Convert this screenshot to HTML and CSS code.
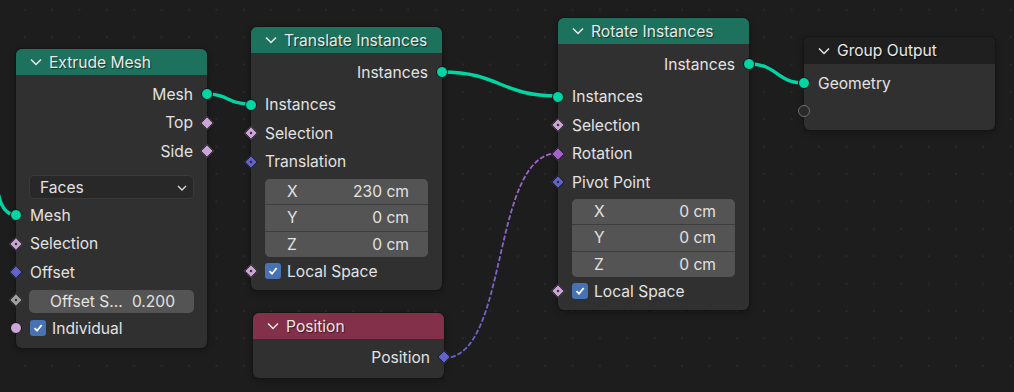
FILE: index.html
```html
<!DOCTYPE html>
<html lang="en">
<head>
    <meta charset="UTF-8">
    <meta name="viewport" content="width=device-width, initial-scale=1.0">
    <title>Geometry Nodes</title>
    <link rel="stylesheet" href="styles.css">
</head>
<body>

    <div class="canvas">
        <!-- Enlaces entre nodos -->
        <svg class="links" width="1014" height="392" viewBox="0 0 1014 392">
            <defs>
                <linearGradient id="field-link" x1="444" y1="358" x2="558" y2="153" gradientUnits="userSpaceOnUse">
                    <stop offset="0" stop-color="#6363c7"/>
                    <stop offset="1" stop-color="#a663c7"/>
                </linearGradient>
            </defs>
            <path class="link geo" d="M -40 120 C 10 120, -18 215, 16 215"/>
            <path class="link geo" d="M 206 94 C 230 94, 226 104, 251 104"/>
            <path class="link geo" d="M 442 72 C 500 72, 500 96, 558 96"/>
            <path class="link geo" d="M 749 64 C 778 64, 776 83, 804 83"/>
            <path class="link field" d="M 444 358 C 510 358, 490 153, 558 153"/>
        </svg>

        <!-- Extrude Mesh -->
        <div class="node node-extrude">
            <div class="node-header green">
                <svg class="chevron" width="12" height="8" viewBox="0 0 12 8"><path d="M1 1.5 L6 6.5 L11 1.5"/></svg>
                Extrude Mesh
            </div>
            <div class="node-body">
                <div class="row out">Mesh<span class="socket out circle geo-col"></span></div>
                <div class="row out">Top<span class="socket out diamond bool-col"></span></div>
                <div class="row out">Side<span class="socket out diamond bool-col"></span></div>
                <div class="dropdown">Faces
                    <svg class="drop-arrow" width="10" height="6" viewBox="0 0 10 6"><path d="M1 1 L5 5 L9 1"/></svg>
                </div>
                <div class="row after-drop">Mesh<span class="socket in circle geo-col"></span></div>
                <div class="row">Selection<span class="socket in diamond bool-col dot"></span></div>
                <div class="row">Offset<span class="socket in diamond vec-col"></span></div>
                <div class="field-row">
                    <div class="num-field single"><span>Offset S...</span><span>0.200</span></div>
                    <span class="socket in diamond float-col dot"></span>
                </div>
                <div class="row">
                    <span class="checkbox"><svg width="10" height="10" viewBox="0 0 10 10"><path d="M1.5 5.2 L4 7.7 L8.7 2"/></svg></span>Individual
                    <span class="socket in circle bool-col"></span>
                </div>
            </div>
        </div>

        <!-- Translate Instances -->
        <div class="node node-translate">
            <div class="node-header green">
                <svg class="chevron" width="12" height="8" viewBox="0 0 12 8"><path d="M1 1.5 L6 6.5 L11 1.5"/></svg>
                Translate Instances
            </div>
            <div class="node-body">
                <div class="row out">Instances<span class="socket out circle geo-col"></span></div>
                <div class="row first-in">Instances<span class="socket in circle geo-col"></span></div>
                <div class="row">Selection<span class="socket in diamond bool-col dot"></span></div>
                <div class="row">Translation<span class="socket in diamond vec-col dot"></span></div>
                <div class="vector">
                    <div class="num-field"><span>X</span><span>230 cm</span></div>
                    <div class="num-field"><span>Y</span><span>0 cm</span></div>
                    <div class="num-field"><span>Z</span><span>0 cm</span></div>
                </div>
                <div class="row">
                    <span class="checkbox"><svg width="10" height="10" viewBox="0 0 10 10"><path d="M1.5 5.2 L4 7.7 L8.7 2"/></svg></span>Local Space
                    <span class="socket in diamond bool-col dot"></span>
                </div>
            </div>
        </div>

        <!-- Position -->
        <div class="node node-position">
            <div class="node-header red">
                <svg class="chevron" width="12" height="8" viewBox="0 0 12 8"><path d="M1 1.5 L6 6.5 L11 1.5"/></svg>
                Position
            </div>
            <div class="node-body">
                <div class="row out">Position<span class="socket out diamond vec-col"></span></div>
            </div>
        </div>

        <!-- Rotate Instances -->
        <div class="node node-rotate">
            <div class="node-header green">
                <svg class="chevron" width="12" height="8" viewBox="0 0 12 8"><path d="M1 1.5 L6 6.5 L11 1.5"/></svg>
                Rotate Instances
            </div>
            <div class="node-body">
                <div class="row out">Instances<span class="socket out circle geo-col"></span></div>
                <div class="row first-in">Instances<span class="socket in circle geo-col"></span></div>
                <div class="row">Selection<span class="socket in diamond bool-col dot"></span></div>
                <div class="row">Rotation<span class="socket in diamond rot-col"></span></div>
                <div class="row">Pivot Point<span class="socket in diamond vec-col dot"></span></div>
                <div class="vector">
                    <div class="num-field"><span>X</span><span>0 cm</span></div>
                    <div class="num-field"><span>Y</span><span>0 cm</span></div>
                    <div class="num-field"><span>Z</span><span>0 cm</span></div>
                </div>
                <div class="row">
                    <span class="checkbox"><svg width="10" height="10" viewBox="0 0 10 10"><path d="M1.5 5.2 L4 7.7 L8.7 2"/></svg></span>Local Space
                    <span class="socket in diamond bool-col dot"></span>
                </div>
            </div>
        </div>

        <!-- Group Output -->
        <div class="node node-output">
            <div class="node-header dark">
                <svg class="chevron" width="12" height="8" viewBox="0 0 12 8"><path d="M1 1.5 L6 6.5 L11 1.5"/></svg>
                Group Output
            </div>
            <div class="node-body">
                <div class="row">Geometry<span class="socket in circle geo-col"></span></div>
                <div class="row short"><span class="socket in circle empty"></span></div>
            </div>
        </div>
    </div>

</body>
</html>
```

FILE: styles.css
```css
* {
    margin: 0;
    padding: 0;
    box-sizing: border-box;
}

body {
    background-color: #1d1d1d;
    font-family: 'Inter', 'DejaVu Sans', sans-serif;
    font-size: 15.6px;
    color: #e2e2e2;
    overflow: hidden;
}

/* Lienzo del editor de nodos */
.canvas {
    position: relative;
    width: 1014px;
    height: 392px;
    overflow: hidden;
    background-color: #1d1d1d;
    background-image: radial-gradient(circle, #292929 0.8px, transparent 1.2px);
    background-size: 27.4px 27.4px;
    background-position: 11px -4px;
}

.links {
    position: absolute;
    left: 0;
    top: 0;
}

.link {
    fill: none;
}

.link.geo {
    stroke: #00d6a3;
    stroke-width: 3.4;
}

.link.field {
    stroke: url(#field-link);
    stroke-width: 1.8;
    stroke-dasharray: 5 2;
}

/* Nodos */
.node {
    position: absolute;
    width: 191px;
    background-color: #303030;
    border-radius: 6px;
    box-shadow: 0 0 0 1px #151515, 0 2px 6px rgba(0, 0, 0, 0.35);
}

.node-extrude { left: 16px; top: 49px; }
.node-translate { left: 251px; top: 27px; }
.node-position { left: 253px; top: 313px; }
.node-rotate { left: 558px; top: 18px; }
.node-output { left: 804px; top: 37px; }

.node-header {
    height: 26px;
    display: flex;
    align-items: center;
    gap: 7px;
    padding-left: 14px;
    border-radius: 6px 6px 0 0;
    color: #e8e8e8;
    text-shadow: 1px 1px 1px rgba(0, 0, 0, 0.55);
}

.node-header.green { background-color: #1d725e; }
.node-header.red { background-color: #83304a; }
.node-header.dark { background-color: #1f1f1f; height: 27px; }

.chevron {
    fill: none;
    stroke: #e8e8e8;
    stroke-width: 1.5;
}

.node-body {
    padding: 5px 0 6px;
}

.node-translate .node-body { padding: 5px 0 5px; }
.node-rotate .node-body { padding: 6px 0 5px; }
.node-position .node-body { padding: 4px 0 6px; }

.row {
    position: relative;
    height: 28.5px;
    display: flex;
    align-items: center;
    gap: 6px;
    padding: 0 14px;
}

.row.out {
    justify-content: flex-end;
}

.row.first-in {
    margin-top: 4px;
}

.row.after-drop {
    margin-top: 1.75px;
}

.row.short {
    height: 26px;
}

/* Conectores */
.socket {
    position: absolute;
    top: 50%;
    border: 1px solid #111;
}

.socket.in { left: 0; }
.socket.out { left: 100%; }

.socket.circle {
    width: 12px;
    height: 12px;
    border-radius: 50%;
    transform: translate(-50%, -50%);
}

.socket.diamond {
    width: 10px;
    height: 10px;
    transform: translate(-50%, -50%) rotate(45deg);
}

.socket.dot::after {
    content: '';
    position: absolute;
    left: 3px;
    top: 3px;
    width: 2px;
    height: 2px;
    background-color: #222;
}

.geo-col { background-color: #00d6a3; }
.bool-col { background-color: #cca6d6; }
.vec-col { background-color: #6363c7; }
.rot-col { background-color: #a663c7; }
.float-col { background-color: #a1a1a1; }

.socket.empty {
    background-color: #2a2a2a;
    border: 1px solid #6e6e6e;
}

/* Widgets */
.dropdown {
    position: relative;
    margin: 9.5px 13px 0 13px;
    height: 24px;
    display: flex;
    align-items: center;
    padding-left: 10px;
    background-color: #282828;
    border: 1px solid #3a3a3a;
    border-radius: 5px;
}

.drop-arrow {
    position: absolute;
    right: 6px;
    top: 9px;
    fill: none;
    stroke: #d8d8d8;
    stroke-width: 1.4;
}

.field-row {
    position: relative;
    padding: 4px 13px 0.5px;
}

.vector {
    margin: 3px 14px 0 14px;
    border-radius: 5px;
    overflow: hidden;
    background-color: #3d3d3d;
    display: flex;
    flex-direction: column;
    gap: 1px;
}

.node-rotate .vector {
    margin-top: 2.5px;
}

.num-field {
    height: 25.3px;
    display: flex;
    align-items: center;
    justify-content: space-between;
    padding: 0 19px 0 22px;
    background-color: #545454;
}

.num-field.single {
    height: 23px;
    border-radius: 5px;
    padding: 0 19px 0 21px;
}

.checkbox {
    width: 16px;
    height: 16px;
    border-radius: 3px;
    background-color: #4772b3;
    display: flex;
    align-items: center;
    justify-content: center;
}

.checkbox svg {
    fill: none;
    stroke: #ffffff;
    stroke-width: 1.8;
}
```
